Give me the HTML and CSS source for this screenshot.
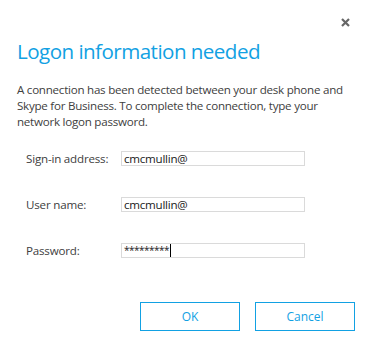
FILE: index.html
```html
<!DOCTYPE html>
<html>
<head>
<meta charset="utf-8">
<link rel="stylesheet" href="styles.css">
</head>
<body>
<div class="dialog">
  <div class="close-row">
    <svg class="close" width="9" height="9" viewBox="0 0 9 9"><path d="M1 1L8 8M8 1L1 8" stroke="#666666" stroke-width="2.2"/></svg>
  </div>
  <h1 class="title">Logon information needed</h1>
  <p class="message">A connection has been detected between your desk phone and Skype for Business. To complete the connection, type your network logon password.</p>
  <div class="form">
    <div class="row"><span class="label">Sign-in address:</span><span class="field">cmcmullin@</span></div>
    <div class="row"><span class="label">User name:</span><span class="field">cmcmullin@</span></div>
    <div class="row"><span class="label">Password:</span><span class="field"><span class="stars">*********</span><span class="caret"></span></span></div>
  </div>
  <div class="buttons">
    <div class="btn">OK</div>
    <div class="btn">Cancel</div>
  </div>
</div>
</body>
</html>
```
FILE: styles.css
```css
html, body {
  margin: 0;
  padding: 0;
  background: #ffffff;
}
.dialog {
  width: 372px;
  height: 348px;
  font-family: "Open Sans", "Noto Sans", sans-serif;
  color: #444444;
  box-sizing: border-box;
}
.close-row {
  height: 37px;
  display: flex;
  justify-content: flex-end;
  align-items: flex-start;
  padding-right: 22px;
  padding-top: 18px;
  box-sizing: border-box;
}
.close {
  display: block;
}
.title {
  margin: 0;
  padding-left: 17px;
  font-size: 20.6px;
  line-height: 28px;
  font-weight: 400;
  letter-spacing: -0.55px;
  color: #12a1e3;
}
.message {
  margin: 17px 0 0 0;
  padding: 0 17px;
  font-size: 11.6px;
  letter-spacing: -0.25px;
  line-height: 16px;
  color: #404040;
}
.form {
  margin-top: 21px;
  padding-left: 26px;
  display: flex;
  flex-direction: column;
  gap: 31px;
}
.row {
  display: flex;
  align-items: center;
  height: 15px;
}
.label {
  width: 95px;
  font-size: 11.6px;
  letter-spacing: -0.2px;
  color: #404040;
}
.field {
  width: 184px;
  height: 15px;
  box-sizing: border-box;
  border: 1px solid #dadada;
  padding-left: 2px;
  font-size: 11.6px;
  letter-spacing: -0.25px;
  line-height: 13px;
  color: #1a1a1a;
  display: flex;
  align-items: center;
}
.stars {
  font-size: 10px;
  letter-spacing: -0.5px;
}
.caret {
  display: inline-block;
  width: 1px;
  height: 13px;
  background: #000;
  margin-left: 1px;
}
.buttons {
  margin-top: 44px;
  padding-right: 17px;
  display: flex;
  justify-content: flex-end;
  gap: 15px;
}
.btn {
  width: 100px;
  height: 29px;
  box-sizing: border-box;
  border: 1px solid #12a1e3;
  color: #12a1e3;
  font-size: 12px;
  display: flex;
  align-items: center;
  justify-content: center;
}
```
